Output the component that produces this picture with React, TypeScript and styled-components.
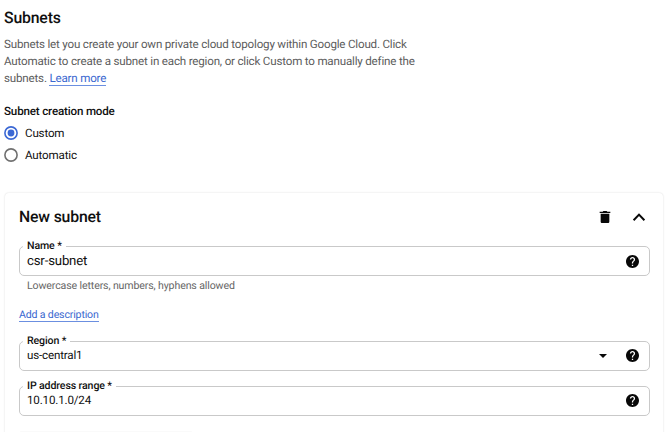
import React from 'react';
import styled, { createGlobalStyle } from 'styled-components';

const GlobalStyle = createGlobalStyle`
  * { box-sizing: border-box; }
  body {
    margin: 0;
    background: #fff;
    color: #101010;
    font-family: Roboto, "Liberation Sans", sans-serif;
    font-size: 11.6px;
    letter-spacing: -0.17px;
    text-rendering: geometricPrecision;
    overflow: hidden;
  }
`;

const Page = styled.main`
  width: 671px;
  height: 432px;
  overflow: hidden;
  padding: 8px 8px 0 4px;
`;

const Title = styled.h1`
  margin: 0;
  font-size: 15.8px;
  line-height: 20px;
  font-weight: 500;
`;

const Description = styled.p`
  margin: 8px 0 0;
  color: #5c5c5c;
  line-height: 17px;
  letter-spacing: -0.19px;
  white-space: nowrap;
`;

const Link = styled.a`
  color: #3b68d0;
  text-decoration: none;
  border-bottom: 1px solid #6b8fe0;
`;

const GroupLabel = styled.h2`
  margin: 16px 0 0;
  font-size: 11.6px;
  line-height: 16px;
  font-weight: 500;
`;

const Option = styled.label`
  display: flex;
  align-items: center;
  gap: 7px;
  height: 22px;
`;

const Options = styled.div`
  padding-top: 3px;
`;

const RadioIcon = styled.svg<{ $checked: boolean }>`
  width: 14px;
  height: 14px;
  fill: none;
  stroke: ${(p) => (p.$checked ? '#3b68d4' : '#707070')};
`;

const Panel = styled.section`
  width: 658px;
  height: 260px;
  margin: 27px 0 0 1px;
  padding: 12px 14px 0 14px;
  border-radius: 4px;
  box-shadow: 0 0 2px rgba(0, 0, 0, 0.16);
`;

const PanelHeader = styled.header`
  display: flex;
  align-items: center;
  height: 24px;
`;

const PanelTitle = styled.h2`
  flex: 1;
  margin: 0;
  font-size: 15.8px;
  line-height: 24px;
  font-weight: 500;
`;

const HeaderIcon = styled.svg<{ $size: number; $gap?: number }>`
  width: ${(p) => p.$size}px;
  height: ${(p) => p.$size}px;
  margin-right: ${(p) => p.$gap ?? 0}px;
  fill: #080808;
`;

const Field = styled.fieldset<{ $top: number }>`
  display: block;
  min-width: 0;
  width: 631px;
  height: 37px;
  margin: ${(p) => p.$top}px 0 0;
  padding: 0 10px 0 3px;
  border: 1px solid #c9c9c9;
  border-radius: 5px;
`;

const FieldLabel = styled.legend`
  height: 14px;
  padding: 0 4px;
  font-size: 10.6px;
  letter-spacing: -0.12px;
  line-height: 13px;
  font-weight: 500;
`;

const FieldBody = styled.div<{ $large?: boolean }>`
  display: flex;
  align-items: center;
  height: ${(p) => (p.$large ? 17 : 15)}px;
  padding-left: 4px;
`;

const Value = styled.span<{ $large?: boolean }>`
  flex: 1;
  font-size: ${(p) => (p.$large ? 13.2 : 11.6)}px;
  line-height: ${(p) => (p.$large ? 17 : 15)}px;
`;

const HelpSvg = styled.svg`
  width: 13px;
  height: 13px;
  fill: #080808;
`;

const Caret = styled.svg`
  width: 8px;
  height: 4px;
  margin-right: 19px;
  fill: #080808;
`;

const Hint = styled.div`
  padding: 3px 0 0 8px;
  color: #666;
  font-size: 10.6px;
  letter-spacing: -0.13px;
  line-height: 14px;
`;

const LinkRow = styled.div`
  margin-top: 15px;
  font-size: 10.6px;
  line-height: 14px;
`;

const NextBlock = styled.div`
  width: 174px;
  height: 10px;
  margin-top: 15px;
  border-radius: 3px;
  background: #fafafa;
`;

function Radio({ checked = false }: { checked?: boolean }) {
  return (
    <RadioIcon $checked={checked} viewBox="0 0 14 14">
      <circle cx="7" cy="7" r="6.1" strokeWidth="1.6" />
      {checked && <circle cx="7" cy="7" r="3.4" fill="#3b68d4" stroke="none" />}
    </RadioIcon>
  );
}

function Help() {
  return (
    <HelpSvg viewBox="2 2 20 20">
      <path d="M12 2C6.48 2 2 6.48 2 12s4.48 10 10 10 10-4.48 10-10S17.52 2 12 2zm1 17h-2v-2h2v2zm2.07-7.75-.9.92C13.45 12.9 13 13.5 13 15h-2v-.5c0-1.1.45-2.1 1.17-2.83l1.24-1.26c.37-.36.59-.86.59-1.41 0-1.1-.9-2-2-2s-2 .9-2 2H8c0-2.21 1.79-4 4-4s4 1.79 4 4c0 .88-.36 1.68-.93 2.25z" />
    </HelpSvg>
  );
}

interface TextFieldProps {
  label: string;
  value: string;
  top: number;
  large?: boolean;
  select?: boolean;
}

function TextField({ label, value, top, large, select }: TextFieldProps) {
  return (
    <Field $top={top}>
      <FieldLabel>{label} *</FieldLabel>
      <FieldBody $large={large}>
        <Value $large={large}>{value}</Value>
        {select && (
          <Caret viewBox="0 0 8 4">
            <path d="M0 0h8L4 4z" />
          </Caret>
        )}
        <Help />
      </FieldBody>
    </Field>
  );
}

export default function App() {
  return (
    <>
      <GlobalStyle />
      <Page>
        <Title>Subnets</Title>
        <Description>
          Subnets let you create your own private cloud topology within Google Cloud. Click
          <br />
          Automatic to create a subnet in each region, or click Custom to manually define the
          <br />
          subnets. <Link>Learn more</Link>
        </Description>
        <GroupLabel>Subnet creation mode</GroupLabel>
        <Options>
          <Option>
            <Radio checked />
            Custom
          </Option>
          <Option>
            <Radio />
            Automatic
          </Option>
        </Options>
        <Panel>
          <PanelHeader>
            <PanelTitle>New subnet</PanelTitle>
            <HeaderIcon $size={16} $gap={16} viewBox="0 0 24 24">
              <path d="M5.5 19c0 1.1.9 2 2 2h9c1.1 0 2-.9 2-2V7h-13v12zM20 4h-4.5l-1-1h-5l-1 1H4v2h16V4z" />
            </HeaderIcon>
            <HeaderIcon $size={20} viewBox="0 0 20 20">
              <path d="M4.6 13.2 10 7.6l5.4 5.6" fill="none" stroke="#080808" strokeWidth="2" />
            </HeaderIcon>
          </PanelHeader>
          <TextField label="Name" value="csr-subnet" top={10} large />
          <Hint>Lowercase letters, numbers, hyphens allowed</Hint>
          <LinkRow>
            <Link>Add a description</Link>
          </LinkRow>
          <TextField label="Region" value="us-central1" top={12} select />
          <TextField label="IP address range" value="10.10.1.0/24" top={8} />
          <NextBlock />
        </Panel>
      </Page>
    </>
  );
}
